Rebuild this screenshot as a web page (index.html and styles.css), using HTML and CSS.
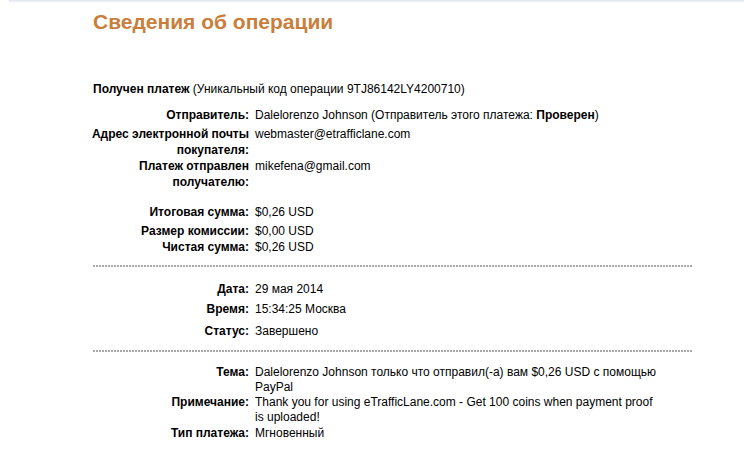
FILE: index.html
```html
<!DOCTYPE html>
<html lang="ru">
<head>
    <meta charset="UTF-8">
    <title>Сведения об операции</title>
    <link rel="stylesheet" href="styles.css">
</head>
<body>
    <div class="topbar"></div>

    <div class="page">
        <h1>Сведения об операции</h1>

        <p class="received"><b>Получен платеж</b> (Уникальный код операции 9TJ86142LY4200710)</p>

        <!-- Участники и суммы -->
        <div class="details">
            <div class="row gap-10">
                <div class="label">Отправитель:</div>
                <div class="value">Dalelorenzo Johnson (Отправитель этого платежа: <b>Проверен</b>)</div>
            </div>
            <div class="row gap-3">
                <div class="label">Адрес электронной почты<br>покупателя:</div>
                <div class="value">webmaster@etrafficlane.com</div>
            </div>
            <div class="row">
                <div class="label">Платеж отправлен<br>получателю:</div>
                <div class="value">mikefena@gmail.com</div>
            </div>
            <div class="row gap-14">
                <div class="label">Итоговая сумма:</div>
                <div class="value">$0,26 USD</div>
            </div>
            <div class="row gap-3">
                <div class="label">Размер комиссии:</div>
                <div class="value">$0,00 USD</div>
            </div>
            <div class="row">
                <div class="label">Чистая сумма:</div>
                <div class="value">$0,26 USD</div>
            </div>
        </div>

        <hr class="dotted">

        <!-- Дата и статус -->
        <div class="details">
            <div class="row gap-14">
                <div class="label">Дата:</div>
                <div class="value">29 мая 2014</div>
            </div>
            <div class="row gap-4">
                <div class="label">Время:</div>
                <div class="value">15:34:25 Москва</div>
            </div>
            <div class="row gap-6">
                <div class="label">Статус:</div>
                <div class="value">Завершено</div>
            </div>
        </div>

        <hr class="dotted wide">

        <!-- Сообщение -->
        <div class="details compact">
            <div class="row gap-13">
                <div class="label">Тема:</div>
                <div class="value">Dalelorenzo Johnson только что отправил(-а) вам $0,26 USD с помощью PayPal</div>
            </div>
            <div class="row">
                <div class="label">Примечание:</div>
                <div class="value">Thank you for using eTrafficLane.com - Get 100 coins when payment proof is uploaded!</div>
            </div>
            <div class="row gap-1">
                <div class="label">Тип платежа:</div>
                <div class="value">Мгновенный</div>
            </div>
        </div>
    </div>
</body>
</html>
```

FILE: styles.css
```css
body {
    margin: 0;
    background: #fff;
    color: #000;
    font-family: "Liberation Sans", Arial, sans-serif;
    font-size: 12px;
    line-height: 16px;
}

.topbar {
    height: 3px;
    margin-left: 9px;
    background: linear-gradient(#dfe4ec, #fff);
}

.page {
    width: 600px;
    padding-left: 93px;
}

h1 {
    margin: 7px 0 0;
    font-size: 21px;
    line-height: 24px;
    font-weight: bold;
    color: #c97f3b;
}

.received {
    margin: 47px 0 0;
}

.details {
    display: flex;
    flex-direction: column;
    margin-left: -20px;
}

.row {
    display: grid;
    grid-template-columns: 176px 405px;
    column-gap: 6px;
}

.label {
    font-weight: bold;
    text-align: right;
    white-space: nowrap;
}

.compact .row {
    line-height: 15px;
}

.gap-1 { margin-top: 1px; }
.gap-3 { margin-top: 3px; }
.gap-4 { margin-top: 4px; }
.gap-6 { margin-top: 6px; }
.gap-10 { margin-top: 10px; }
.gap-13 { margin-top: 13px; }
.gap-14 { margin-top: 14px; }

.dotted {
    height: 2px;
    margin: 10px 0 0;
    border: none;
    background: linear-gradient(90deg, #a8a8a8 2px, transparent 2px) 0 0 / 3px 2px repeat-x;
}

.dotted.wide {
    margin-top: 11px;
}
```
